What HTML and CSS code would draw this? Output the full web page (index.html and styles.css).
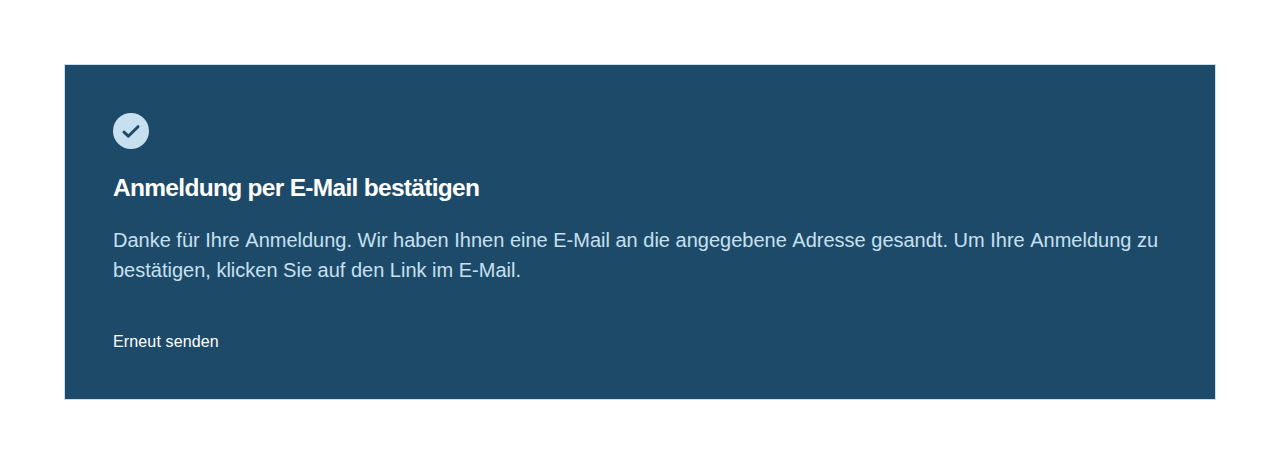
FILE: index.html
```html
<!DOCTYPE html>
<html lang="de">
<head>
<meta charset="utf-8">
<title>Anmeldung per E-Mail bestätigen</title>
<link rel="stylesheet" href="styles.css">
</head>
<body>
<main class="card">
  <svg class="icon" viewBox="0 0 36 36" aria-hidden="true">
    <circle class="icon-disc" cx="18" cy="18" r="18"/>
    <path class="icon-check" d="M11 19.2l4.3 4L25 13.7"/>
  </svg>
  <h1 class="title">Anmeldung per E-Mail bestätigen</h1>
  <p class="text">Danke für Ihre Anmeldung. Wir haben Ihnen eine E-Mail an die angegebene Adresse gesandt. Um Ihre Anmeldung zu bestätigen, klicken Sie auf den Link im E-Mail.</p>
  <button class="resend" type="button">Erneut senden</button>
</main>
</body>
</html>
```
FILE: styles.css
```css
body {
  margin: 0;
  padding: 64px;
  background: #fff;
  font-family: "Liberation Sans", Arial, sans-serif;
}
.card {
  box-sizing: border-box;
  height: 336px;
  padding: 48px;
  background: #1e4a69;
  border: 1px solid #c7e0f0;
}
.icon {
  display: block;
  width: 36px;
  height: 36px;
}
.icon-disc { fill: #c7e0f0; }
.icon-check {
  fill: none;
  stroke: #1e4a69;
  stroke-width: 3;
  stroke-linecap: round;
  stroke-linejoin: round;
}
.title {
  margin: 24px 0 0;
  color: #fff;
  font-size: 24.5px;
  font-weight: 700;
  line-height: 30px;
  letter-spacing: -0.7px;
}
.text {
  margin: 22px 0 0;
  color: #c7e0f0;
  font-size: 20px;
  line-height: 30px;
  font-kerning: none;
}
.resend {
  display: block;
  margin: 45px 0 0;
  padding: 0;
  border: 0;
  background: none;
  color: #fff;
  font: 16px/24px "Liberation Sans", Arial, sans-serif;
  letter-spacing: 0.14px;
}
```
